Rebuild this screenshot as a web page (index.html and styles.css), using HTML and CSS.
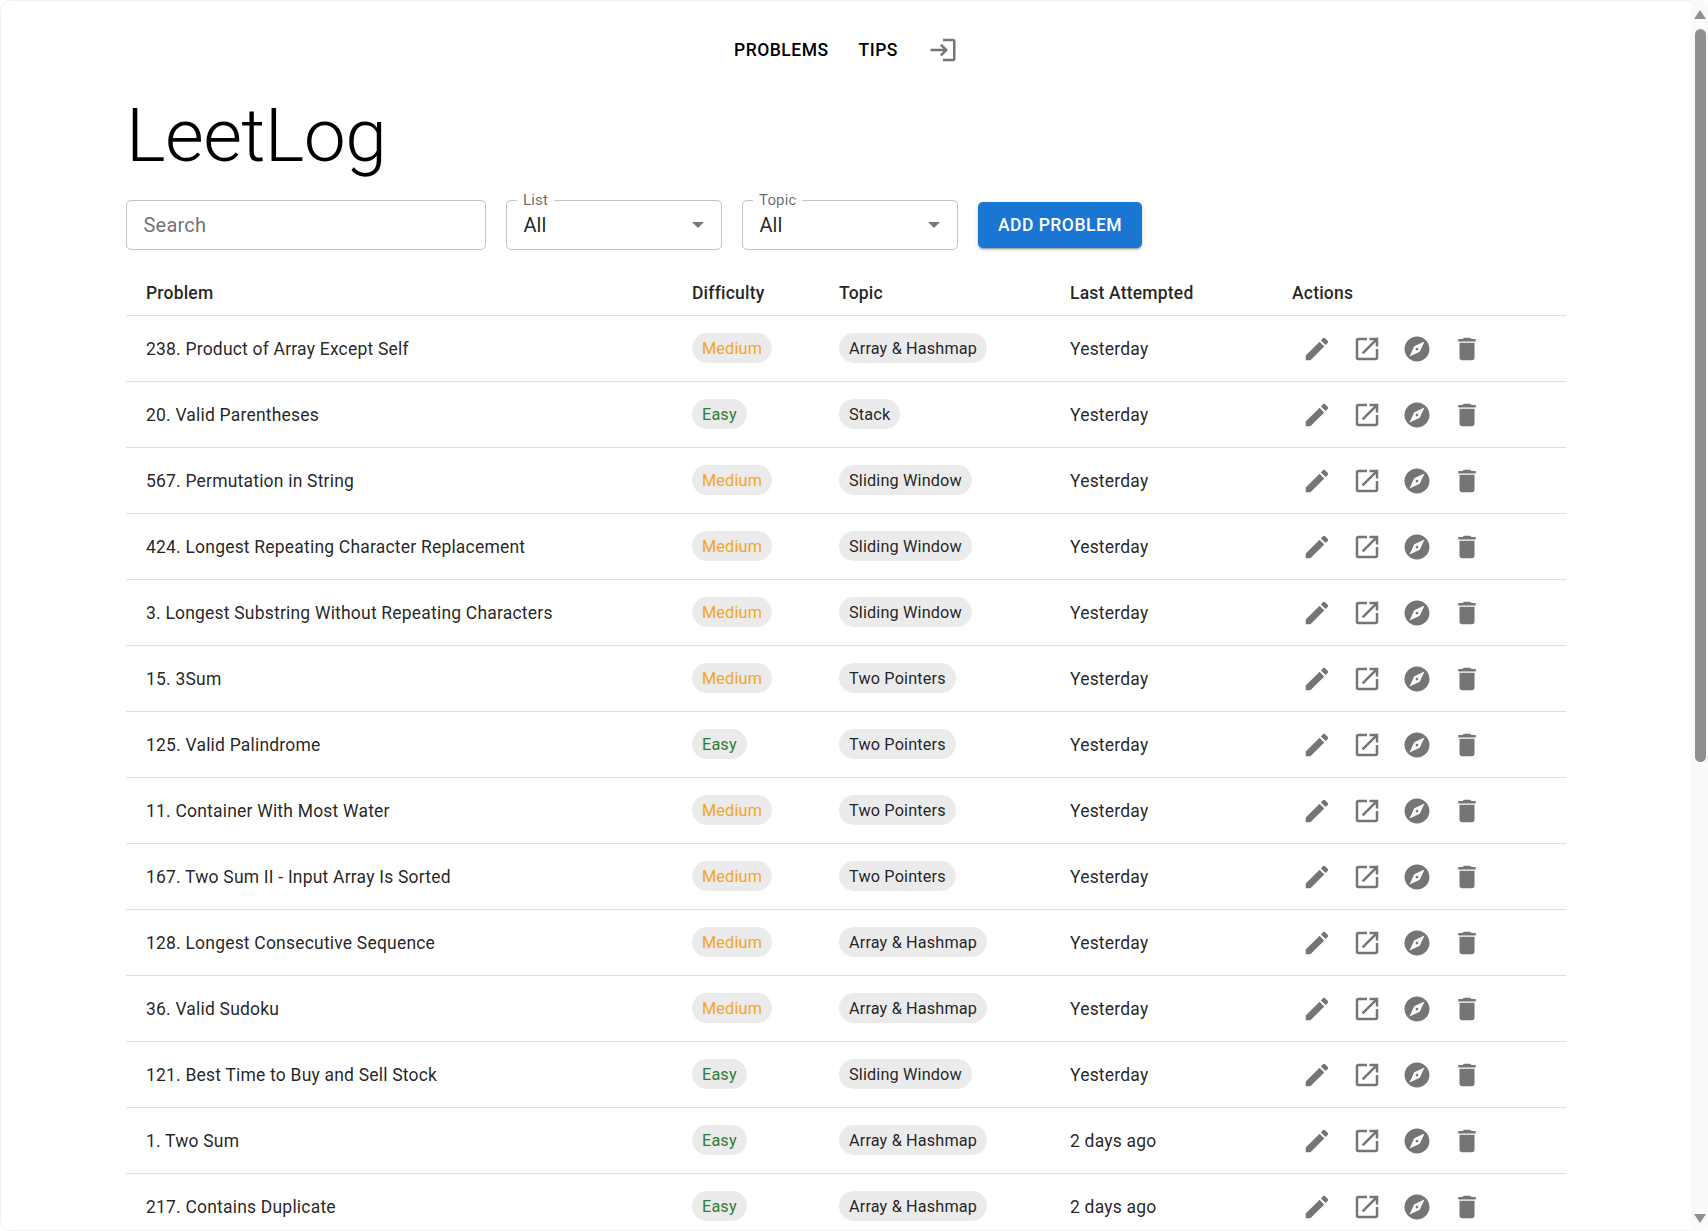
FILE: index.html
```html
<!DOCTYPE html>
<html lang="en">
<head>
  <meta charset="UTF-8">
  <title>LeetLog</title>
  <link rel="stylesheet" href="styles.css">
</head>
<body>
  <svg class="defs" width="0" height="0">
    <symbol id="i-edit" viewBox="0 0 24 24"><path d="M3 17.25V21h3.75L17.81 9.94l-3.75-3.75L3 17.25zM20.71 7.04c.39-.39.39-1.02 0-1.41l-2.34-2.34a.9959.9959 0 0 0-1.41 0l-1.83 1.83 3.75 3.75 1.83-1.83z"/></symbol>
    <symbol id="i-open" viewBox="0 0 24 24"><path d="M19 19H5V5h7V3H5c-1.11 0-2 .9-2 2v14c0 1.1.89 2 2 2h14c1.1 0 2-.9 2-2v-7h-2v7zM14 3v2h3.59l-9.83 9.83 1.41 1.41L19 6.41V10h2V3h-7z"/></symbol>
    <symbol id="i-explore" viewBox="0 0 24 24"><path d="M12 10.9c-.61 0-1.1.49-1.1 1.1s.49 1.1 1.1 1.1c.61 0 1.1-.49 1.1-1.1s-.49-1.1-1.1-1.1zM12 2C6.48 2 2 6.48 2 12s4.48 10 10 10 10-4.48 10-10S17.52 2 12 2zm2.19 12.19L6 18l3.81-8.19L18 6l-3.81 8.19z"/></symbol>
    <symbol id="i-delete" viewBox="0 0 24 24"><path d="M6 19c0 1.1.9 2 2 2h8c1.1 0 2-.9 2-2V7H6v12zM19 4h-3.5l-1-1h-5l-1 1H5v2h14V4z"/></symbol>
    <symbol id="i-login" viewBox="0 0 24 24"><path d="M11 7 9.6 8.4l2.6 2.6H2v2h10.2l-2.6 2.6L11 17l5-5-5-5zm9 12h-8v2h8c1.1 0 2-.9 2-2V5c0-1.1-.9-2-2-2h-8v2h8v14z"/></symbol>
  </svg>

  <div class="page">
    <nav class="nav">
      <a class="nav-link">PROBLEMS</a>
      <a class="nav-link">TIPS</a>
      <span class="icon-btn"><svg class="icon"><use href="#i-login"/></svg></span>
    </nav>

    <main class="content">
      <h1 class="title">LeetLog</h1>

      <div class="filters">
        <div class="field field-search"><span class="placeholder">Search</span></div>
        <div class="field field-select">
          <span class="field-label">List</span>
          <span class="field-value">All</span>
          <span class="caret"></span>
        </div>
        <div class="field field-select">
          <span class="field-label">Topic</span>
          <span class="field-value">All</span>
          <span class="caret"></span>
        </div>
        <button class="button" type="button">ADD PROBLEM</button>
      </div>

      <table class="problems">
        <colgroup>
          <col class="col-problem"><col class="col-difficulty"><col class="col-topic"><col class="col-last"><col class="col-actions">
        </colgroup>
        <thead>
          <tr><th>Problem</th><th>Difficulty</th><th>Topic</th><th>Last Attempted</th><th>Actions</th></tr>
        </thead>
        <tbody id="rows"></tbody>
      </table>
    </main>
  </div>

  <div class="scrollbar">
    <span class="arrow arrow-up"></span>
    <span class="thumb"></span>
    <span class="arrow arrow-down"></span>
  </div>

  <script>
    var problems = [
      ["238. Product of Array Except Self", "Medium", "Array & Hashmap", "Yesterday"],
      ["20. Valid Parentheses", "Easy", "Stack", "Yesterday"],
      ["567. Permutation in String", "Medium", "Sliding Window", "Yesterday"],
      ["424. Longest Repeating Character Replacement", "Medium", "Sliding Window", "Yesterday"],
      ["3. Longest Substring Without Repeating Characters", "Medium", "Sliding Window", "Yesterday"],
      ["15. 3Sum", "Medium", "Two Pointers", "Yesterday"],
      ["125. Valid Palindrome", "Easy", "Two Pointers", "Yesterday"],
      ["11. Container With Most Water", "Medium", "Two Pointers", "Yesterday"],
      ["167. Two Sum II - Input Array Is Sorted", "Medium", "Two Pointers", "Yesterday"],
      ["128. Longest Consecutive Sequence", "Medium", "Array & Hashmap", "Yesterday"],
      ["36. Valid Sudoku", "Medium", "Array & Hashmap", "Yesterday"],
      ["121. Best Time to Buy and Sell Stock", "Easy", "Sliding Window", "Yesterday"],
      ["1. Two Sum", "Easy", "Array & Hashmap", "2 days ago"],
      ["217. Contains Duplicate", "Easy", "Array & Hashmap", "2 days ago"]
    ];

    // Build the rows
    var html = "";
    var icons = ["edit", "open", "explore", "delete"];
    problems.forEach(function (p) {
      var actions = icons.map(function (name) {
        return '<span class="icon-btn"><svg class="icon"><use href="#i-' + name + '"/></svg></span>';
      }).join("");
      html += "<tr><td>" + p[0].replace("&", "&amp;") + "</td>" +
        '<td><span class="chip ' + p[1].toLowerCase() + '">' + p[1] + "</span></td>" +
        '<td><span class="chip">' + p[2].replace("&", "&amp;") + "</span></td>" +
        "<td>" + p[3] + "</td>" +
        '<td class="actions">' + actions + "</td></tr>";
    });
    document.getElementById("rows").innerHTML = html;
  </script>
</body>
</html>
```

FILE: styles.css
```css
* {
  box-sizing: border-box;
}

html, body {
  height: 100%;
  margin: 0;
  overflow: hidden;
  background: #fff;
}

body {
  font-family: Roboto, "Liberation Sans", sans-serif;
  color: rgba(0, 0, 0, 0.87);
  border-radius: 10px;
  box-shadow: inset 0 0 0 1px #f2f2f2;
}

.defs {
  display: block;
  height: 0;
}

.page {
  width: 1692px;
}

.nav {
  display: flex;
  justify-content: center;
  align-items: center;
  gap: 10px;
  height: 100px;
}

.nav-link {
  padding: 0 10px;
  color: #000;
  font-size: 17.5px;
  font-weight: 500;
  letter-spacing: 0.5px;
}

.icon-btn {
  display: inline-flex;
  justify-content: center;
  align-items: center;
  width: 50px;
  height: 50px;
}

.icon {
  width: 30px;
  height: 30px;
  fill: #757575;
}

.content {
  width: 1440px;
  margin: 0 auto;
}

.title {
  margin: 0;
  height: 100px;
  color: #000;
  font-size: 75px;
  line-height: 70px;
  font-weight: 300;
  letter-spacing: -0.6px;
}

.filters {
  display: flex;
  align-items: center;
  gap: 20px;
  height: 50px;
}

.field {
  position: relative;
  display: flex;
  align-items: center;
  height: 50px;
  padding: 0 16.5px;
  border: 1px solid #c4c4c4;
  border-radius: 5px;
  font-size: 20px;
}

.field-search {
  width: 360px;
}

.field-select {
  width: 216px;
}

.placeholder {
  color: rgba(0, 0, 0, 0.58);
  letter-spacing: 0.2px;
}

.field-label {
  position: absolute;
  top: -9px;
  left: 10px;
  padding: 0 6px;
  background: #fff;
  font-size: 15px;
  line-height: 17px;
  letter-spacing: 0.15px;
  color: rgba(0, 0, 0, 0.6);
}

.caret {
  position: absolute;
  top: 21px;
  right: 17px;
  border-left: 6.5px solid transparent;
  border-right: 6.5px solid transparent;
  border-top: 6.5px solid #757575;
}

.button {
  width: 164px;
  height: 46px;
  border: none;
  border-radius: 5px;
  background-color: #1976d2;
  color: #fff;
  font-family: inherit;
  font-size: 17.5px;
  font-weight: 500;
  letter-spacing: 0.5px;
  box-shadow: 0 3px 1px -2px rgba(0, 0, 0, 0.2), 0 2px 2px 0 rgba(0, 0, 0, 0.14), 0 1px 5px 0 rgba(0, 0, 0, 0.12);
}

.problems {
  width: 1440px;
  margin-top: 15px;
  border-collapse: collapse;
  table-layout: fixed;
  font-size: 17.5px;
  letter-spacing: 0.2px;
}

.col-problem { width: 546px; }
.col-difficulty { width: 147px; }
.col-topic { width: 231px; }
.col-last { width: 222px; }
.col-actions { width: 294px; }

.problems th {
  height: 50px;
  padding: 6px 20px 0;
  text-align: left;
  font-weight: 500;
  border-bottom: 1px solid #e0e0e0;
}

.problems td {
  height: 66px;
  padding: 2px 20px 0;
  border-bottom: 1px solid #e0e0e0;
}

.problems td.actions {
  font-size: 0;
}

.chip {
  display: inline-flex;
  align-items: center;
  height: 30px;
  margin-top: -2px;
  padding: 0 10px;
  border-radius: 15px;
  background: #ebebeb;
  font-size: 16.25px;
  letter-spacing: 0.15px;
  vertical-align: middle;
}

.chip.medium {
  color: #f5a623;
}

.chip.easy {
  color: #2e7d32;
}

.scrollbar {
  position: absolute;
  top: 0;
  right: 0;
  bottom: 0;
  width: 17px;
  border-radius: 0 10px 10px 0;
  background: #fafafa;
}

.thumb {
  position: absolute;
  top: 29px;
  left: 4px;
  width: 11px;
  height: 733px;
  border-radius: 6px;
  background: #8f8f8f;
}

.arrow {
  position: absolute;
  left: 3px;
  border-left: 6.5px solid transparent;
  border-right: 6.5px solid transparent;
}

.arrow-up {
  top: 10px;
  border-bottom: 9px solid #8f8f8f;
}

.arrow-down {
  bottom: 8px;
  border-top: 9px solid #8f8f8f;
}
```
